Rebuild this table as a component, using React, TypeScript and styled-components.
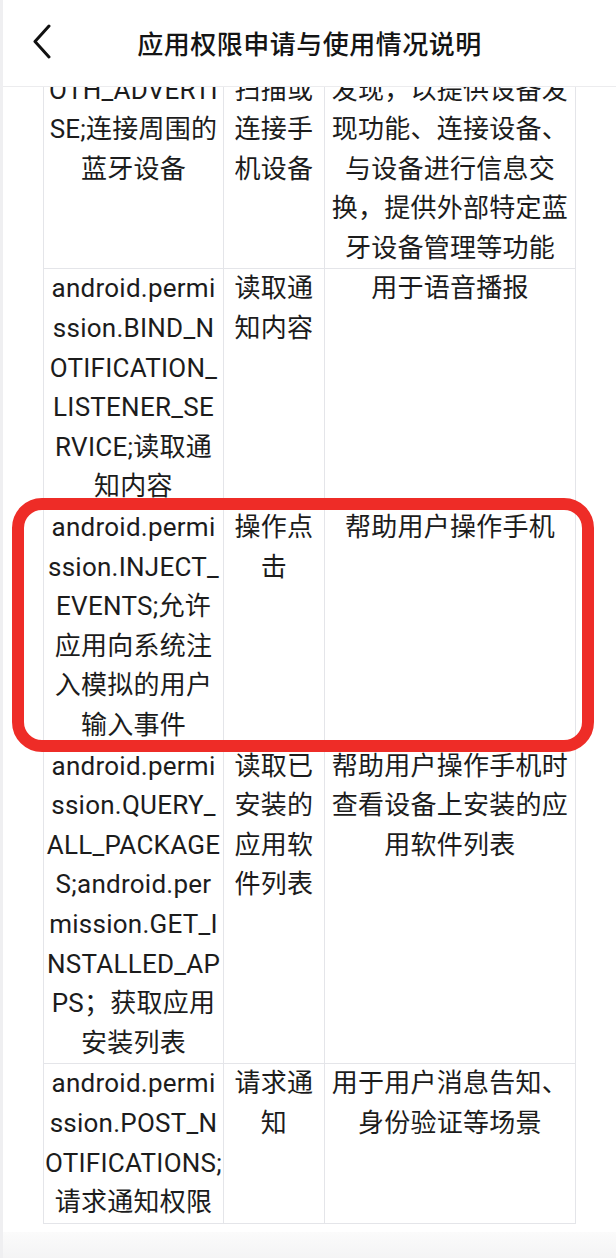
import React from "react";
import styled, { createGlobalStyle } from "styled-components";

const GlobalStyle = createGlobalStyle`
  html, body {
    margin: 0;
    padding: 0;
    background: #ffffff;
  }
  body {
    font-family: Roboto, "Noto Sans CJK SC", sans-serif;
    color: #1c1c1c;
  }
  * { box-sizing: border-box; }
`;

const Page = styled.div`
  position: relative;
  width: 616px;
  height: 1258px;
  display: flex;
  flex-direction: column;
  border-left: 3px solid #efeff1;
  overflow: hidden;
  background: #ffffff;
`;

const Header = styled.header`
  position: relative;
  z-index: 2;
  flex: 0 0 87px;
  display: flex;
  align-items: center;
  justify-content: center;
  padding-bottom: 2px;
  background: #ffffff;
  border-bottom: 1px solid #ececee;
`;

const BackButton = styled.button`
  position: absolute;
  left: 23px;
  top: 22px;
  width: 32px;
  height: 40px;
  padding: 0;
  border: 0;
  background: transparent;
  display: flex;
  align-items: center;
  justify-content: center;
`;

const Title = styled.h1`
  margin: 0;
  font-family: "Noto Sans CJK SC", sans-serif;
  font-size: 26px;
  font-weight: 500;
  color: #141414;
  letter-spacing: 0.5px;
`;

const Main = styled.main`
  flex: 1 1 auto;
  overflow: hidden;
  padding: 0 40px;
`;

const Grid = styled.div`
  margin-top: -17.5px;
  display: grid;
  grid-template-columns: 180px 101px 1fr;
  border-left: 1px solid #e4e5e9;
  border-top: 1px solid #e4e5e9;
`;

const Cell = styled.div`
  border-right: 1px solid #e4e5e9;
  border-bottom: 1px solid #e4e5e9;
  display: flex;
  flex-direction: column;
  align-items: center;
  font-size: 26px;
  line-height: 39.6px;
  letter-spacing: 0.25px;
  color: #1c1c1c;
`;

const Line = styled.span`
  display: block;
  white-space: nowrap;
  text-align: center;
`;

const Footer = styled.footer`
  flex: 0 0 26px;
  background: linear-gradient(180deg, #fbfbfb 0%, #f4f4f5 100%);
`;

const Highlight = styled.div`
  position: absolute;
  left: 9px;
  top: 498px;
  width: 582px;
  height: 254px;
  border: 12px solid #ee2c27;
  border-radius: 30px;
  pointer-events: none;
  z-index: 3;
`;

type Row = [string[], string[], string[]];

const rows: Row[] = [
  [
    ["OTH_ADVERTI", "SE;连接周围的", "蓝牙设备"],
    ["扫描或", "连接手", "机设备"],
    [
      "发现，以提供设备发",
      "现功能、连接设备、",
      "与设备进行信息交",
      "换，提供外部特定蓝",
      "牙设备管理等功能",
    ],
  ],
  [
    ["android.permi", "ssion.BIND_N", "OTIFICATION_", "LISTENER_SE", "RVICE;读取通", "知内容"],
    ["读取通", "知内容"],
    ["用于语音播报"],
  ],
  [
    ["android.permi", "ssion.INJECT_", "EVENTS;允许", "应用向系统注", "入模拟的用户", "输入事件"],
    ["操作点", "击"],
    ["帮助用户操作手机"],
  ],
  [
    [
      "android.permi",
      "ssion.QUERY_",
      "ALL_PACKAGE",
      "S;android.per",
      "mission.GET_I",
      "NSTALLED_AP",
      "PS；获取应用",
      "安装列表",
    ],
    ["读取已", "安装的", "应用软", "件列表"],
    ["帮助用户操作手机时", "查看设备上安装的应", "用软件列表"],
  ],
  [
    ["android.permi", "ssion.POST_N", "OTIFICATIONS;", "请求通知权限"],
    ["请求通", "知"],
    ["用于用户消息告知、", "身份验证等场景"],
  ],
];

export default function App() {
  return (
    <>
      <GlobalStyle />
      <Page>
        <Header>
          <BackButton aria-label="返回">
            <svg width="24" height="36" viewBox="0 0 24 36" fill="none">
              <polyline
                points="19,2 5,17.5 19,33"
                stroke="#111"
                strokeWidth="3"
                strokeLinecap="round"
                strokeLinejoin="round"
              />
            </svg>
          </BackButton>
          <Title>应用权限申请与使用情况说明</Title>
        </Header>
        <Main>
          <Grid>
            {rows.map((row, ri) =>
              row.map((lines, ci) => (
                <Cell key={`${ri}-${ci}`}>
                  {lines.map((l, li) => (
                    <Line key={li}>{l}</Line>
                  ))}
                </Cell>
              ))
            )}
          </Grid>
        </Main>
        <Footer />
        <Highlight />
      </Page>
    </>
  );
}
